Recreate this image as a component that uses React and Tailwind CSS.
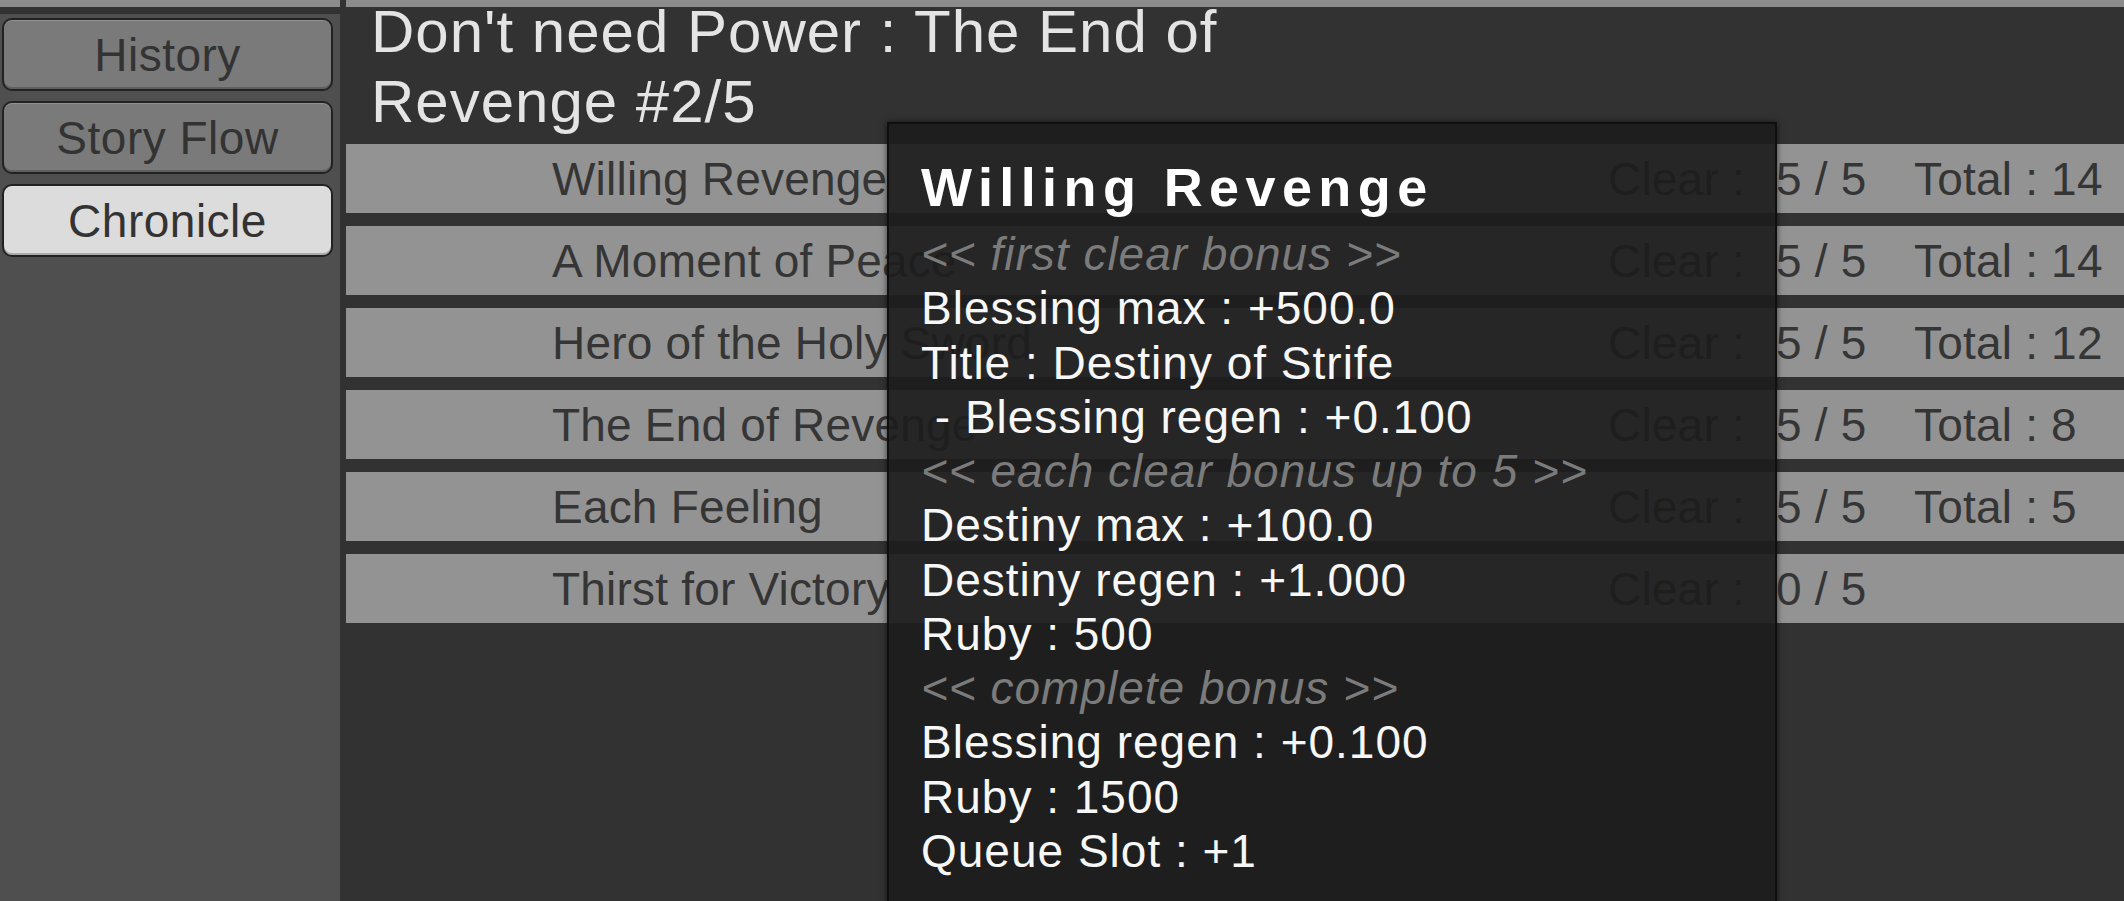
import React from 'react';

const TABS = [
  { label: 'History', active: false },
  { label: 'Story Flow', active: false },
  { label: 'Chronicle', active: true },
];

const CHAPTERS = [
  { name: 'Willing Revenge', clear: '5 / 5', total: 14 },
  { name: 'A Moment of Peace', clear: '5 / 5', total: 14 },
  { name: 'Hero of the Holy Sword', clear: '5 / 5', total: 12 },
  { name: 'The End of Revenge', clear: '5 / 5', total: 8 },
  { name: 'Each Feeling', clear: '5 / 5', total: 5 },
  { name: 'Thirst for Victory', clear: '0 / 5', total: null },
];

// tooltip body: header lines are the grey italic ones
const BONUS_LINES = [
  { text: '<< first clear bonus >>', header: true },
  { text: 'Blessing max : +500.0' },
  { text: 'Title : Destiny of Strife' },
  { text: ' - Blessing regen : +0.100' },
  { text: '<< each clear bonus up to 5 >>', header: true },
  { text: 'Destiny max : +100.0' },
  { text: 'Destiny regen : +1.000' },
  { text: 'Ruby : 500' },
  { text: '<< complete bonus >>', header: true },
  { text: 'Blessing regen : +0.100' },
  { text: 'Ruby : 1500' },
  { text: 'Queue Slot : +1' },
];

const Sidebar = () => (
  <aside className="flex w-[340px] shrink-0 flex-col">
    <div className="h-[7px] bg-[#8c8c8c]" />
    <div className="h-[7px]" />
    <div className="flex flex-1 flex-col gap-[10px] bg-[#4f4f4f] pt-[4px]">
      {TABS.map((tab) => (
        <button
          key={tab.label}
          type="button"
          className={[
            'ml-[2px] flex h-[73px] w-[331px] items-center justify-center rounded-[10px] border-2 border-[#222222] text-[46px] leading-none tracking-[0.5px] text-[#333333] shadow-[inset_0_1px_0_rgba(255,255,255,0.18),inset_0_-2px_0_rgba(0,0,0,0.22)]',
            tab.active ? 'bg-[#dcdcdc]' : 'bg-[#7a7a7a]',
          ].join(' ')}
        >
          {tab.label}
        </button>
      ))}
    </div>
  </aside>
);

const ChapterRow = ({ chapter }) => (
  <div className="flex h-[69px] items-center bg-[#939393] pl-[206px] text-[46px] leading-none tracking-[0.2px] text-[#353535]">
    <div className="w-[1056px] shrink-0 whitespace-nowrap">{chapter.name}</div>
    <div className="w-[168px] shrink-0 whitespace-nowrap">Clear :</div>
    <div className="w-[138px] shrink-0 whitespace-nowrap">{chapter.clear}</div>
    <div className="flex-1 whitespace-nowrap">
      {chapter.total !== null ? `Total : ${chapter.total}` : ''}
    </div>
  </div>
);

const BonusTooltip = () => (
  <div className="absolute left-[887px] top-[122px] h-[830px] w-[890px] border-2 border-[#0f0f0f] bg-[rgba(28,28,28,0.92)] pl-[32px] pt-[23px] shadow-[0_0_6px_rgba(0,0,0,0.6)]">
    <div className="whitespace-nowrap text-[54px] font-bold leading-[80px] tracking-[6.4px] text-white">
      Willing Revenge
    </div>
    {BONUS_LINES.map((line, idx) => (
      <div
        key={idx}
        className={[
          'whitespace-pre text-[46px] leading-[54.25px] tracking-[1px]',
          line.header ? 'italic text-[#7b7b7b]' : 'text-[#f7f7f7]',
        ].join(' ')}
      >
        {line.text}
      </div>
    ))}
  </div>
);

export default function App() {
  return (
    <div className="relative flex h-[901px] w-[2124px] overflow-hidden bg-[#323232] font-['Liberation_Sans',Arial,sans-serif]">
      <Sidebar />

      <main className="flex flex-1 flex-col pl-[6px]">
        <div className="h-[7px] shrink-0 bg-[#8c8c8c]" />
        <h1 className="-mt-[10px] h-[140px] shrink-0 pl-[25px] text-[60px] font-normal leading-[70px] tracking-[1px] text-[#e4e4e4]">
          Don't need Power : The End of
          <br />
          Revenge #2/5
        </h1>
        <div className="mt-[7px] flex flex-col gap-[13px]">
          {CHAPTERS.map((chapter) => (
            <ChapterRow key={chapter.name} chapter={chapter} />
          ))}
        </div>
      </main>

      <BonusTooltip />
    </div>
  );
}
